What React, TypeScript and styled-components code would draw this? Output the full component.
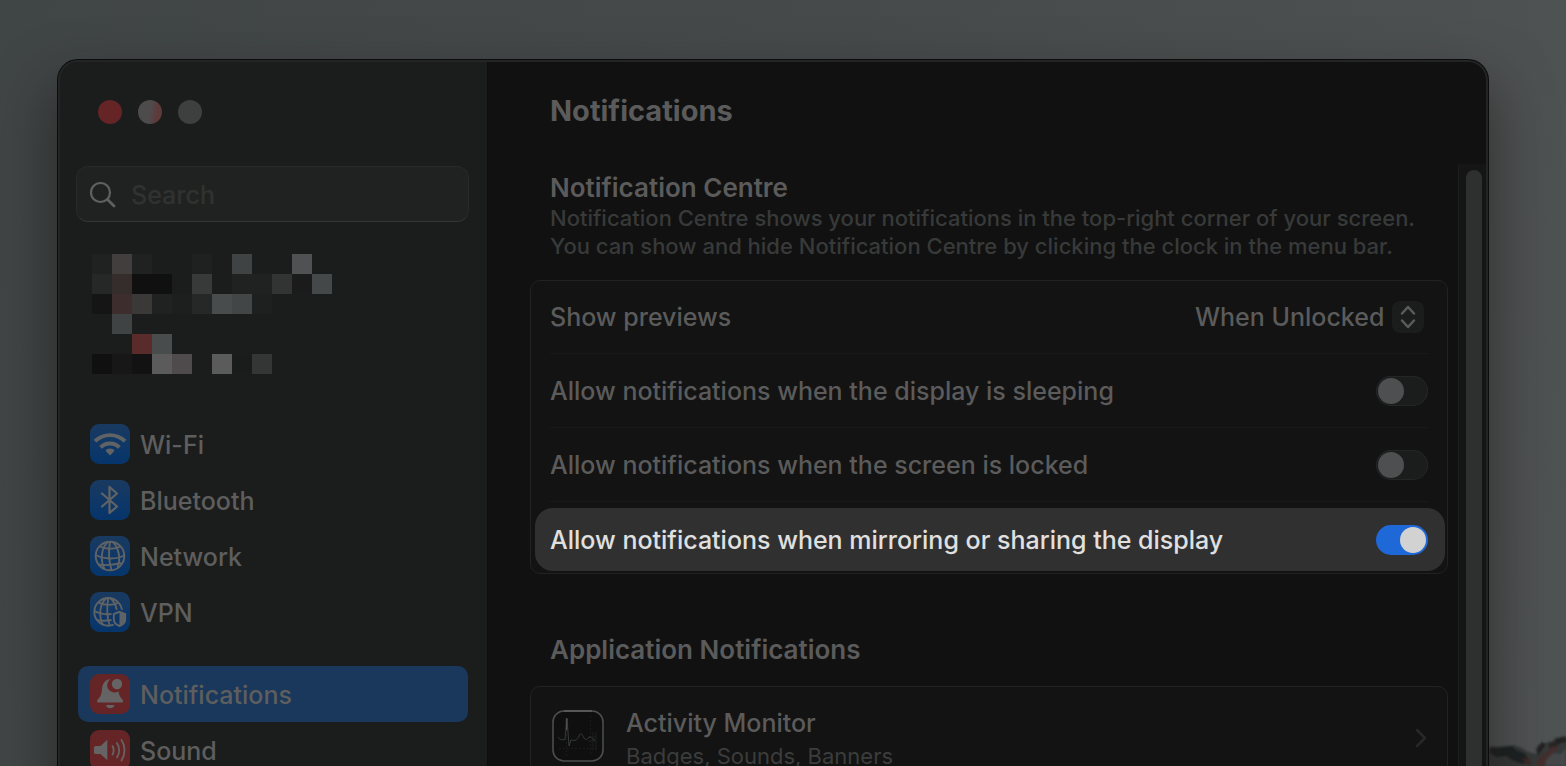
import React from "react";
import styled, { createGlobalStyle } from "styled-components";

const GlobalStyle = createGlobalStyle`
  *, *::before, *::after { box-sizing: border-box; }
  body { margin: 0; background: #46494a; }
  h1, h2, p { margin: 0; }
`;

const Desktop = styled.div`
  position: relative;
  height: 100vh;
  overflow: hidden;
  padding: 60px 78px 0 58px;
  background: linear-gradient(100deg, #404546 0%, #464a4b 50%, #505354 100%);
  font-family: Inter, "Liberation Sans", sans-serif;
  font-weight: 500;
  color: #5b5b5b;
`;

const Rocks = styled.svg`
  position: absolute;
  right: 0;
  bottom: 0;
  width: 80px;
  height: 32px;
`;

const Window = styled.div`
  position: relative;
  display: flex;
  min-height: 900px;
  border-radius: 20px;
  background: #111111;
  box-shadow: 0 0 0 1px #0c0c0c, 0 30px 56px 6px rgba(24, 20, 16, 0.52);
  overflow: hidden;

  &::after {
    content: "";
    position: absolute;
    inset: 0;
    border: 2px solid #232525;
    border-radius: 20px;
    pointer-events: none;
  }
`;

const Sidebar = styled.aside`
  width: 430px;
  flex: none;
  padding: 40px 18px 0;
  background: #1b1d1c;
  border-right: 1px solid #0e0e0e;
`;

const TrafficLights = styled.div`
  display: flex;
  gap: 16px;
  padding-left: 22px;
`;

const Light = styled.button<{ $fill: string }>`
  width: 24px;
  height: 24px;
  padding: 0;
  border: 0;
  border-radius: 50%;
  background: ${(p) => p.$fill};
`;

const SearchBox = styled.label`
  display: flex;
  align-items: center;
  gap: 14px;
  height: 56px;
  margin-top: 42px;
  padding: 2px 12px 0;
  border: 1px solid #282a29;
  border-bottom-color: #343635;
  border-radius: 12px;
  background: #202221;
`;

const SearchInput = styled.input`
  flex: 1;
  min-width: 0;
  padding: 0;
  border: 0;
  outline: 0;
  background: transparent;
  font: 500 25px/32px Inter, "Liberation Sans", sans-serif;
  color: #5b5b5b;

  &::placeholder { color: #303231; opacity: 1; }
`;

const Mosaic = styled.div`
  display: grid;
  grid-template-columns: repeat(12, 20px);
  grid-auto-rows: 20px;
  margin: 32px 0 0 16px;
`;

const Tile = styled.span<{ $fill: string }>`
  background: ${(p) => p.$fill};
`;

const NavList = styled.nav<{ $gap: number }>`
  display: flex;
  flex-direction: column;
  margin: ${(p) => p.$gap}px 1px 0 2px;
`;

const NavItem = styled.a<{ $active?: boolean }>`
  display: flex;
  align-items: center;
  gap: 10px;
  height: 56px;
  padding-left: 12px;
  border-radius: 10px;
  background: ${(p) => (p.$active ? "#19385c" : "transparent")};
  font-size: 25px;
  line-height: 32px;
  color: #5e5e5e;
  text-decoration: none;
`;

const NavLabel = styled.span`
  padding-top: 2px;
`;

const NavIcon = styled.span<{ $tone: "blue" | "red" }>`
  width: 40px;
  height: 40px;
  border-radius: 9px;
  background: ${(p) => (p.$tone === "blue" ? "linear-gradient(#193a60, #06356c)" : "#652526")};

  svg { display: block; width: 40px; height: 40px; }
`;

const Main = styled.main`
  flex: 1;
  min-width: 0;
  display: flex;
  flex-direction: column;
`;

const Title = styled.h1`
  height: 104px;
  padding: 32px 0 0 62px;
  font-size: 29px;
  line-height: 38px;
  font-weight: 700;
`;

const ScrollArea = styled.div`
  flex: 1;
  display: flex;
`;

const Content = styled.div`
  flex: 1;
  min-width: 0;
  padding: 8px 10px 0 42px;
`;

const SectionTitle = styled.h2`
  padding-left: 20px;
  font-size: 26px;
  line-height: 32px;
  font-weight: 600;
`;

const Description = styled.p`
  padding-left: 20px;
  font-size: 22px;
  line-height: 28px;
  color: #383a39;
`;

const Card = styled.section`
  margin: 20px 0 60px;
  border: 1px solid #212222;
  border-radius: 10px;
  background: #131313;
`;

const SettingRow = styled.label<{ $highlight?: boolean }>`
  display: flex;
  align-items: center;
  justify-content: space-between;
  height: ${(p) => (p.$highlight ? 63 : 74)}px;
  margin: ${(p) => (p.$highlight ? "6px 2px 2px 4px" : "0 19px")};
  padding: ${(p) => (p.$highlight ? "0 17px 0 15px" : "0")};
  border-radius: ${(p) => (p.$highlight ? 18 : 0)}px;
  border-bottom: ${(p) => (p.$highlight ? "0" : "1px solid #181919")};
  background: ${(p) => (p.$highlight ? "#303030" : "transparent")};
  font-size: 25px;
  line-height: 32px;
  color: ${(p) => (p.$highlight ? "#e0e0e0" : "#5b5b5b")};

  &:first-child { height: 73px; }
`;

const Picker = styled.span`
  display: flex;
  align-items: center;
  gap: 7px;
  margin-right: 4px;
`;

const PickerSelect = styled.select`
  appearance: none;
  padding: 0;
  border: 0;
  background: transparent;
  font: 500 25px/32px Inter, "Liberation Sans", sans-serif;
  color: #5b5b5b;
`;

const Stepper = styled.svg`
  width: 32px;
  height: 32px;
  border-radius: 8px;
  background: #1b1d1c;
`;

const Switch = styled.input`
  appearance: none;
  display: flex;
  align-items: center;
  flex: none;
  width: 52px;
  height: 30px;
  margin: 0;
  padding: 0 2px;
  border-radius: 15px;
  background: #1b1d1c;
  box-shadow: inset 0 0 0 1px #242626;

  &::before {
    content: "";
    width: 26px;
    height: 26px;
    border-radius: 50%;
    background: #4e4f50;
  }

  &:checked {
    justify-content: flex-end;
    background: #1f68d8;
    box-shadow: none;
  }

  &:checked::before { background: #d2d2d2; }
`;

const AppLink = styled.a`
  display: flex;
  align-items: center;
  gap: 22px;
  padding: 18px 19px 12px 21px;
  color: #5b5b5b;
  text-decoration: none;
`;

const AppIcon = styled.svg`
  width: 52px;
  height: 52px;
  margin-bottom: 4px;
`;

const AppText = styled.span`
  flex: 1;
  display: flex;
  flex-direction: column;
`;

const AppName = styled.span`
  font-size: 25px;
  line-height: 36px;
`;

const AppDetail = styled.span`
  font-size: 22px;
  line-height: 30px;
  font-weight: 400;
  color: #3b3d3c;
`;

const ScrollTrack = styled.div`
  width: 30px;
  padding: 6px 6px 0 7px;
  border-left: 1px solid #1b1c1c;
  background: #151515;
`;

const ScrollThumb = styled.div`
  height: 100%;
  border-radius: 8px;
  background: #2e2f2f;
`;

const MOSAIC: string[][] = [
  ["#202221", "#423e3e", "#202221", "", "", "#1f2120", "", "#404344", "", "", "#505152", ""],
  ["#262827", "#352c2c", "#101010", "#101010", "", "#383a39", "", "#202221", "#202221", "#323333", "#1a1b1a", "#454849"],
  ["#151515", "#3d2d2d", "#3b3938", "#202221", "#1d1f1e", "#262827", "#494c4d", "#434647", "#1e201f", "", "", ""],
  ["", "#404344", "", "", "", "", "", "", "", "", "", ""],
  ["", "", "#5a2b2b", "#494c4d", "", "", "", "", "", "", "", ""],
  ["#101010", "#161716", "#121212", "#5b5b5b", "#4f4b4c", "", "#5b5b5b", "#1a1c1b", "#343535", "", "", ""],
];

const INK = "#606365";

const WifiIcon = () => (
  <svg viewBox="0 0 40 40" fill="none" stroke={INK} strokeWidth="3.8">
    <path d="M5 17.2a21.500 21.500 0 0 1 30 0" />
    <path d="M10.600 23.400a13.300 13.300 0 0 1 18.800 0" />
    <path d="M20 31.500l-4-4.200q-0.800-1 0.400-1.700a7 7 0 0 1 7.200 0q1.200 0.700 0.400 1.700z" fill={INK} stroke="none" />
  </svg>
);

const BluetoothIcon = () => (
  <svg viewBox="0 0 40 40" fill="none" stroke={INK} strokeWidth="2.300" strokeLinejoin="round" strokeLinecap="round">
    <path d="M12 13.500L27 26.500L19.500 33V7L27 13.500L12 26.500" />
  </svg>
);

const Globe = () => (
  <>
    <circle cx="20" cy="20" r="14.300" />
    <path d="M18 5.900C11 12 10 24 14.500 33.300M20 5.700c-1.500 9-1.500 19 1.500 28.300M22.500 5.900c6.500 6 8.500 17 5 25.500" />
    <path d="M10 10.500c6 3 15 3 20.500 0M5.900 19c8 4.500 20.500 4.500 28.300 0.500M8.500 28.500c6 1 15 0.500 22.500-1.500" />
  </>
);

const NetworkIcon = () => (
  <svg viewBox="0 0 40 40" fill="none" stroke={INK} strokeWidth="1.900">
    <Globe />
  </svg>
);

const VpnIcon = () => (
  <svg viewBox="0 0 40 40" fill="none" stroke={INK} strokeWidth="1.900">
    <g transform="translate(-1.200 0.500) scale(0.97)">
      <Globe />
    </g>
    <path d="M29.500 17l8 3v6.500c0 5-3 8-8 9.500c-5-1.500-8-4.500-8-9.500v-6.500z" fill="#0c3768" stroke="none" />
    <path d="M29.500 19.800l5.700 2.200v5c0 3.500-2.200 5.700-5.700 7c-3.500-1.300-5.700-3.500-5.700-7v-5z" />
    <path d="M29.500 19.800l5.700 2.200v5c0 3.500-2.200 5.700-5.700 7z" fill={INK} stroke="none" />
  </svg>
);

const BellIcon = () => (
  <svg viewBox="0 0 40 40" fill="#656363">
    <path d="M20.500 5c-5.500 0.700-8 4.500-8.500 10c-0.500 6-1.500 7.500-4.200 10.500c-1.300 1.500-0.800 3 0.800 3h23c1.600 0 2.100-1.500 0.800-3c-2.200-2.500-3.300-4-3.900-8.200a7 7 0 0 1-8-12.300z" />
    <circle cx="27" cy="10" r="5.200" />
    <path d="M16 31h8.500c-0.500 2.200-2.200 3.300-4.250 3.300s-3.750-1.100-4.250-3.300z" />
  </svg>
);

const SoundIcon = () => (
  <svg viewBox="0 0 40 40" fill="none" stroke="#656363" strokeWidth="1.800" strokeLinecap="round">
    <path d="M5.500 16h5l6.800-6.300v20.600l-6.800-6.300h-5a1.500 1.500 0 0 1-1.500-1.500v-5a1.500 1.500 0 0 1 1.500-1.500z" fill="#656363" stroke="none" />
    <path d="M22.500 16a9 9 0 0 1 0 8.500" />
    <path d="M27 13a14 14 0 0 1 0 14.500" />
    <path d="M31.500 10a19 19 0 0 1 0 20.500" />
  </svg>
);

const SearchIcon = () => (
  <svg width="28" height="28" viewBox="0 0 28 28" fill="none" stroke="#606060" strokeWidth="2.200" strokeLinecap="round">
    <circle cx="11.500" cy="11.500" r="9.500" />
    <path d="M18.500 18.500l6.500 6.500" strokeWidth="2.800" />
  </svg>
);

const ActivityIcon = () => (
  <AppIcon viewBox="0 0 52 52" fill="none" aria-hidden="true">
    <rect x="1" y="1" width="50" height="50" rx="11" fill="#0f0f0f" stroke="#4c4d4d" strokeWidth="1.600" />
    <path d="M12 1h28" stroke="#5e5e5e" strokeWidth="1.600" />
    <path d="M14.500 8v38M38.500 6v40M7 38.500h38" stroke="#1a1c1b" strokeDasharray="2 2" />
    <path d="M41 22v18M44 22v18M36 27h9M36 31h9" stroke="#1d1f1e" />
    <path d="M6 27c2 3 4 3 7 2.500L15 8L17 36L19 30c5 1 6 0 8-4s3-2 5 2s4-1 6-1s2 3 5 3" stroke="#373a39" />
    <path d="M14.600 20V8.500" stroke="#4c4f4e" strokeWidth="1.600" />
  </AppIcon>
);

const NETWORK_ITEMS = [
  { label: "Wi-Fi", Icon: WifiIcon },
  { label: "Bluetooth", Icon: BluetoothIcon },
  { label: "Network", Icon: NetworkIcon },
  { label: "VPN", Icon: VpnIcon },
];

const SWITCHES = [
  { label: "Allow notifications when the display is sleeping", on: false },
  { label: "Allow notifications when the screen is locked", on: false },
  { label: "Allow notifications when mirroring or sharing the display", on: true },
];

export default function App() {
  return (
    <>
      <GlobalStyle />
      <Desktop>
        <Rocks viewBox="0 0 80 32" aria-hidden="true">
          <defs>
            <filter id="soft" x="-10%" y="-10%" width="120%" height="120%">
              <feGaussianBlur stdDeviation="1" />
            </filter>
          </defs>
          <g filter="url(#soft)">
            <path d="M0 15l6-3 8 2 14-3 8 3 6 4 8 2 4-7 8-5 8 2 5-5 11-1v34H0z" fill="#363838" />
            <path d="M4 14l10-1 12-1 4 4 8 3 5 6-5 5-10-3-8-5-10 1-6-4z" fill="#1f2020" />
            <path d="M50 15l6-7 4 2-4 6-4 5zM68 5l12-3v6l-8 2z" fill="#202020" />
            <path d="M62 9l8-3 3 5-9 4z" fill="#292626" />
            <path d="M50 32l2-8 8-5 6-6 6-1-2 5-7 5-5 10z" fill="#452d2d" />
            <path d="M60 26l7-7 8 1 5-6v18H59z" fill="#444748" />
            <path d="M36 25l4-2 5 6-2 3z" fill="#3c2828" />
          </g>
        </Rocks>
        <Window>
          <Sidebar>
            <TrafficLights>
              <Light $fill="#652526" aria-label="Close" />
              <Light $fill="linear-gradient(100deg, #4e4b4c 50%, #5e3a3b 75%)" aria-label="Minimise" />
              <Light $fill="#3e3f3f" aria-label="Zoom" />
            </TrafficLights>
            <SearchBox>
              <SearchIcon />
              <SearchInput type="search" placeholder="Search" aria-label="Search" />
            </SearchBox>
            <Mosaic aria-hidden="true">
              {MOSAIC.flat().map((fill, i) => (
                <Tile key={i} $fill={fill || "transparent"} />
              ))}
            </Mosaic>
            <NavList $gap={42} aria-label="Connectivity">
              {NETWORK_ITEMS.map(({ label, Icon }) => (
                <NavItem key={label} href="#">
                  <NavIcon $tone="blue"><Icon /></NavIcon>
                  <NavLabel>{label}</NavLabel>
                </NavItem>
              ))}
            </NavList>
            <NavList $gap={26} aria-label="Alerts">
              <NavItem href="#" $active aria-current="page">
                <NavIcon $tone="red"><BellIcon /></NavIcon>
                <NavLabel>Notifications</NavLabel>
              </NavItem>
              <NavItem href="#">
                <NavIcon $tone="red"><SoundIcon /></NavIcon>
                <NavLabel>Sound</NavLabel>
              </NavItem>
            </NavList>
          </Sidebar>
          <Main>
            <Title>Notifications</Title>
            <ScrollArea>
              <Content>
                <SectionTitle>Notification Centre</SectionTitle>
                <Description>
                  Notification Centre shows your notifications in the top-right corner of your screen.
                  <br />
                  You can show and hide Notification Centre by clicking the clock in the menu bar.
                </Description>
                <Card>
                  <SettingRow>
                    Show previews
                    <Picker>
                      <PickerSelect defaultValue="When Unlocked">
                        <option>When Unlocked</option>
                      </PickerSelect>
                      <Stepper viewBox="0 0 32 32" fill="none" stroke="#5b5b5b" strokeWidth="2.500" strokeLinecap="round" strokeLinejoin="round">
                        <path d="M10 12.500l6-6.500 6 6.500M10 19.500l6 6.500 6-6.500" />
                      </Stepper>
                    </Picker>
                  </SettingRow>
                  {SWITCHES.map(({ label, on }) => (
                    <SettingRow key={label} $highlight={on}>
                      {label}
                      <Switch type="checkbox" role="switch" defaultChecked={on} />
                    </SettingRow>
                  ))}
                </Card>
                <SectionTitle>Application Notifications</SectionTitle>
                <Card>
                  <AppLink href="#">
                    <ActivityIcon />
                    <AppText>
                      <AppName>Activity Monitor</AppName>
                      <AppDetail>Badges, Sounds, Banners</AppDetail>
                    </AppText>
                    <svg width="14" height="22" viewBox="0 0 14 22" fill="none" stroke="#272928" strokeWidth="2.500" strokeLinecap="round" strokeLinejoin="round">
                      <path d="M3 3l8 8-8 8" />
                    </svg>
                  </AppLink>
                </Card>
              </Content>
              <ScrollTrack>
                <ScrollThumb />
              </ScrollTrack>
            </ScrollArea>
          </Main>
        </Window>
      </Desktop>
    </>
  );
}
